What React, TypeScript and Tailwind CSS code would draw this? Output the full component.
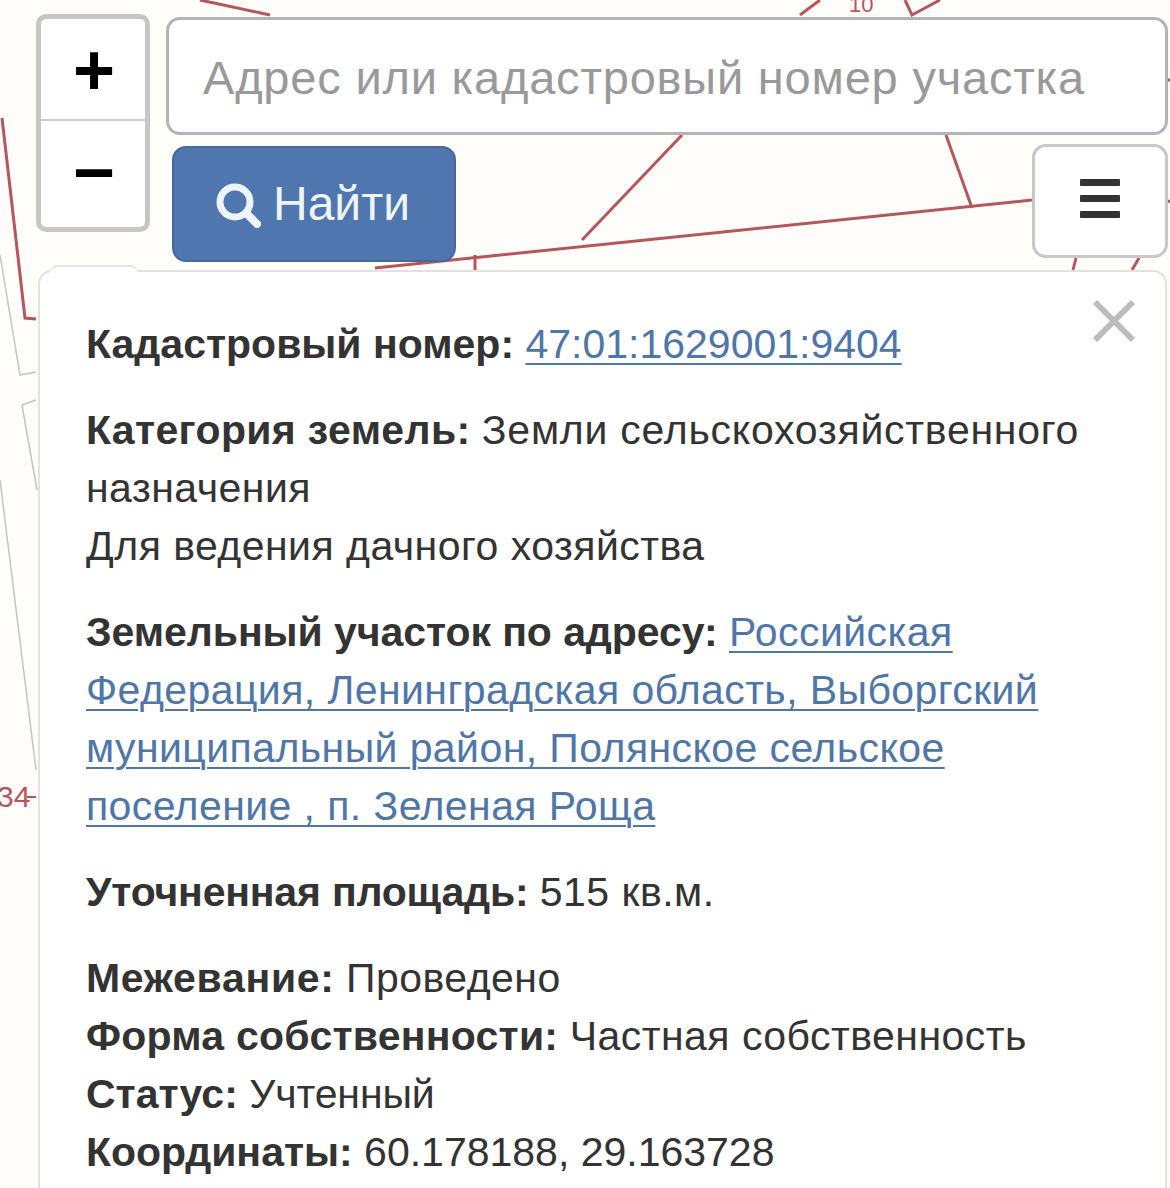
import React from 'react';

const font = { fontFamily: '"Liberation Sans", Arial, sans-serif' };

const redLines = [
  'M200 0 L270 15',
  'M2 118 L25 318 L36 319',
  'M800 15 L820 0',
  'M905 0 L912 15 L940 0',
  'M682 135 L582 240',
  'M946 135 L972 208',
  'M375 268 L1032 200',
  'M475 255 L475 270',
  'M1076 258 L1073 270',
  'M1139 258 L1132 270',
  'M1166 80 L1170 80',
  'M1166 200 L1170 202',
];

const greyLines = [
  'M0 255 L20 375 L36 372',
  'M22 405 L36 400',
  'M22 405 L37 490',
  'M0 480 L36 770',
];

const MapLayer: React.FC = () => (
  <svg className="absolute inset-0" width="1170" height="1188" viewBox="0 0 1170 1188" fill="none">
    {greyLines.map((d) => (
      <path key={d} d={d} stroke="#c4c4c4" strokeWidth="1.5" />
    ))}
    {redLines.map((d) => (
      <path key={d} d={d} stroke="#b5565c" strokeWidth="3" />
    ))}
    <path d="M27 797 L36 797" stroke="#b5565c" strokeWidth="2" />
  </svg>
);

const Label: React.FC<{ children: React.ReactNode; className?: string }> = ({ children, className = '' }) => (
  <b className={`font-bold text-[#333333] ${className}`}>{children}</b>
);

const Plain: React.FC<{ children: React.ReactNode; className?: string }> = ({ children, className = 'tracking-[0.47px]' }) => (
  <span className={className}>{children}</span>
);

const Link: React.FC<{ children: React.ReactNode; wide?: boolean }> = ({ children, wide }) => (
  <a href="#" className={`text-[#4f76a8] underline underline-offset-[5px] decoration-2 ${wide ? 'tracking-[0.42px]' : ''}`}>
    {children}
  </a>
);

const App: React.FC = () => {
  return (
    <div className="relative w-[1170px] h-[1188px] overflow-hidden bg-[#fefdfa]" style={font}>
      <MapLayer />
      <span className="absolute left-[-3px] top-[781px] text-[30px] leading-[32px] text-[#b5565c]">34</span>
      <span className="absolute left-[849px] top-[-7px] text-[22px] leading-[24px] text-[#b5565c]">10</span>

      <div className="relative flex flex-col pt-[14px] pl-[36px]">
        <div className="flex gap-[16px] items-start">
          <div className="w-[114px] h-[218px] shrink-0 flex flex-col rounded-[10px] border-[5px] border-[#c6c6c4] bg-white overflow-hidden text-black font-bold">
            <div className="h-[102px] flex items-center justify-center border-b-2 border-[#cccccc] text-[72px] leading-none pl-[2px] pt-[2px]">+</div>
            <div className="flex-1 flex items-center justify-center text-[72px] leading-none pl-[2px] pb-[4px]">−</div>
          </div>

          <div className="flex-1 flex flex-col pt-[3px]">
            <input
              type="text"
              placeholder="Адрес или кадастровый номер участка"
              className="w-[1002px] h-[118px] bg-white border-[3px] border-[#b4b4b4] rounded-[14px] pl-[34px] pr-4 pt-[2px] text-[47px] tracking-[0.8px] outline-none placeholder-[#999999]"
            />
            <div className="flex items-start justify-between pl-[6px] w-[1002px]">
              <button className="mt-[11px] w-[284px] h-[116px] flex items-center gap-[12px] pl-[41px] rounded-[14px] bg-[#4f76ae] border-2 border-[#46699c] text-[#eef4fa] text-[48px]">
                <svg width="46" height="46" viewBox="0 0 46 46" fill="none" stroke="currentColor" strokeLinecap="round" className="mt-[2px]">
                  <circle cx="20" cy="20" r="15" strokeWidth="7" />
                  <path d="M31 31 L42 42" strokeWidth="8" />
                </svg>
                Найти
              </button>
              <button className="mt-[9px] w-[136px] h-[114px] flex flex-col items-center justify-center gap-[9px] pb-[6px] bg-white border-[3px] border-[#c8c8c8] rounded-[14px]">
                <span className="block w-[40px] h-[7px] bg-[#333333] rounded-[1px]" />
                <span className="block w-[40px] h-[7px] bg-[#333333] rounded-[1px]" />
                <span className="block w-[40px] h-[7px] bg-[#333333] rounded-[1px]" />
              </button>
            </div>
          </div>
        </div>

        <div className="relative mt-[8px] ml-[2px] w-[1129px] h-[940px] bg-white border-2 border-[#e2e2e0] rounded-t-[14px] pl-[46px] pr-[70px] pt-[43px] text-[41px] leading-[58px] text-[#333333]">
          <div className="absolute left-[10px] -top-[7px] w-[88px] h-[8px] rounded-t-[12px] bg-white border-t-2 border-[#e4e4e2]" />
          <svg className="absolute right-[29px] top-[27px]" width="44" height="44" viewBox="0 0 44 44" stroke="#bcbcbc" strokeWidth="6">
            <path d="M3 3 L41 41 M41 3 L3 41" />
          </svg>

          <p>
            <Label>Кадастровый номер:</Label> <Link>47:01:1629001:9404</Link>
          </p>
          <p className="mt-[28px]">
            <Label className="tracking-[0.35px]">Категория земель:</Label>{' '}
            <Plain className="tracking-[0.75px]">Земли сельскохозяйственного</Plain> <Plain>назначения</Plain>
            <br />
            <Plain>Для ведения дачного хозяйства</Plain>
          </p>
          <p className="mt-[28px]">
            <Label className="-tracking-[0.07px]">Земельный участок по адресу:</Label>{' '}
            <Link wide>Российская Федерация, Ленинградская область, Выборгский муниципальный район, Полянское сельское поселение , п. Зеленая Роща</Link>
          </p>
          <p className="mt-[28px]">
            <Label className="-tracking-[0.2px]">Уточненная площадь:</Label> <Plain>515 кв.м.</Plain>
          </p>
          <p className="mt-[28px]">
            <Label className="tracking-[0.7px]">Межевание:</Label> <Plain>Проведено</Plain>
            <br />
            <Label className="tracking-[0.25px]">Форма собственности:</Label> <Plain>Частная собственность</Plain>
            <br />
            <Label>Статус:</Label> <Plain className="-tracking-[0.1px]">Учтенный</Plain>
            <br />
            <Label>Координаты:</Label> 60.178188, 29.163728
          </p>
        </div>
      </div>
    </div>
  );
};

export default App;
